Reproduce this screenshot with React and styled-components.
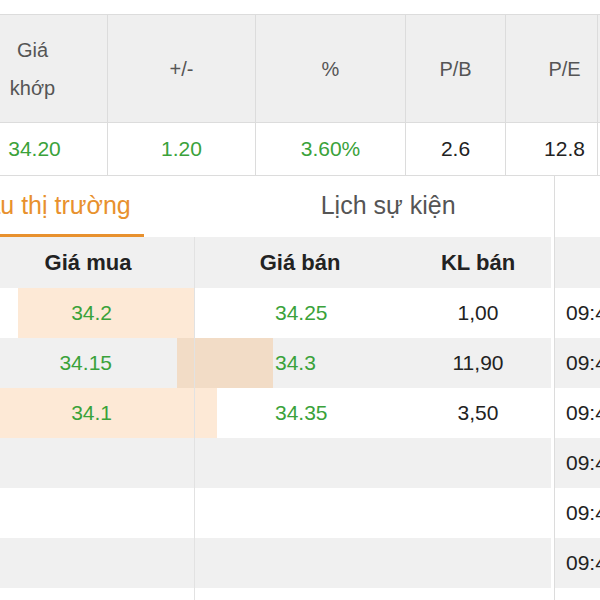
import React from "react";
import styled, { createGlobalStyle } from "styled-components";

const GlobalStyle = createGlobalStyle`
  body {
    margin: 0;
    background: #fff;
    overflow: hidden;
    font-family: "Liberation Sans", Arial, sans-serif;
  }
`;

const colors = {
  up: "#3aa23a",
  text: "#222",
  muted: "#555",
  line: "#dcdcdc",
  head: "#efefef",
  stripe: "#f0f0f0",
  orange: "#e8912e",
  bar: "#fde9d6",
  barDark: "#f2dcc6",
};

const Page = styled.div`
  width: 600px;
  height: 600px;
  overflow: hidden;
  padding-top: 14px;
  box-sizing: border-box;
`;

const Quote = styled.div`
  display: grid;
  grid-template-columns: 108px 148px 150px 100px 92px 80px;
  border-top: 1px solid ${colors.line};
  border-bottom: 1px solid ${colors.line};
`;

const QuoteHead = styled.div`
  height: 107px;
  display: flex;
  align-items: center;
  justify-content: center;
  text-align: center;
  background: ${colors.head};
  color: ${colors.muted};
  font-size: 20px;
  line-height: 38px;
  border-right: 1px solid ${colors.line};
  border-bottom: 1px solid ${colors.line};
  padding: ${(p) => p.$pad || "0"};
`;

const QuoteValue = styled.div`
  height: 52px;
  display: flex;
  align-items: center;
  justify-content: center;
  font-size: 21px;
  color: ${(p) => (p.$up ? colors.up : colors.text)};
  border-right: 1px solid ${colors.line};
  padding: ${(p) => p.$pad || "0"};
`;

const Lower = styled.div`
  display: flex;
`;

const BookPanel = styled.div`
  width: 554px;
  flex: none;
  border-right: 1px solid ${colors.line};
`;

const TabBar = styled.div`
  height: 61px;
  display: flex;
  gap: 164px;
  margin-left: -78px;
`;

const Tab = styled.div`
  display: flex;
  align-items: center;
  padding: 0 13px;
  font-size: 25px;
  white-space: nowrap;
  color: ${(p) => (p.$active ? colors.orange : colors.muted)};
  border-bottom: 3px solid ${(p) => (p.$active ? colors.orange : "transparent")};
`;

const BookRow = styled.div`
  position: relative;
  width: 551px;
  height: ${(p) => (p.$head ? 51 : 50)}px;
  display: grid;
  grid-template-columns: 195px 210px 146px;
  background: ${(p) => (p.$gray ? colors.stripe : "#fff")};
`;

const Bar = styled.div`
  position: absolute;
  top: 0;
  bottom: 0;
  background: ${(p) => (p.$dark ? colors.barDark : colors.bar)};
`;

const BookCell = styled.div`
  position: relative;
  display: flex;
  align-items: center;
  font-size: ${(p) => (p.$head ? 22 : 21)}px;
  font-weight: ${(p) => (p.$head ? "bold" : "normal")};
  color: ${(p) => (p.$up ? colors.up : colors.text)};
  justify-content: ${(p) => p.$align || "center"};
  padding: ${(p) => p.$pad || "0"};
  border-right: ${(p) => (p.$divider ? `1px solid #e2e2e2` : "none")};
`;

const TimePanel = styled.div`
  flex: 1;
  padding-top: 61px;
`;

const TimeRow = styled.div`
  height: ${(p) => (p.$head ? 51 : 50)}px;
  display: flex;
  align-items: center;
  padding-left: 11px;
  font-size: 21px;
  color: ${colors.text};
  white-space: nowrap;
  overflow: hidden;
  background: ${(p) => (p.$gray ? colors.stripe : "#fff")};
  border-right: ${(p) => (p.$head ? `1px solid ${colors.line}` : "none")};
  margin-right: ${(p) => (p.$head ? 3 : 0)}px;
`;

const book = [
  { buy: "34.2", sell: "34.25", vol: "1,00", bar: [18, 177] },
  { buy: "34.15", sell: "34.3", vol: "11,90", bar: [177, 96], dark: true },
  { buy: "34.1", sell: "34.35", vol: "3,50", bar: [0, 217] },
  {},
  {},
  {},
  {},
];

const times = ["09:45:12", "09:44:58", "09:44:31", "09:44:10", "09:43:52", "09:43:27", ""];

export default function App() {
  return (
    <Page>
      <GlobalStyle />
      <Quote>
        <QuoteHead $pad="0 42px 0 0">Giá khớp</QuoteHead>
        <QuoteHead>+/-</QuoteHead>
        <QuoteHead>%</QuoteHead>
        <QuoteHead>P/B</QuoteHead>
        <QuoteHead $pad="0 0 0 26px">P/E</QuoteHead>
        <QuoteHead />
        <QuoteValue $up $pad="0 38px 0 0">34.20</QuoteValue>
        <QuoteValue $up>1.20</QuoteValue>
        <QuoteValue $up>3.60%</QuoteValue>
        <QuoteValue>2.6</QuoteValue>
        <QuoteValue $pad="0 0 0 26px">12.8</QuoteValue>
        <QuoteValue />
      </Quote>
      <Lower>
        <BookPanel>
          <TabBar>
            <Tab $active>Độ sâu thị trường</Tab>
            <Tab>Lịch sự kiện</Tab>
          </TabBar>
          <BookRow $head $gray>
            <BookCell $head $divider $pad="0 18px 0 0">Giá mua</BookCell>
            <BookCell $head>Giá bán</BookCell>
            <BookCell $head>KL bán</BookCell>
          </BookRow>
          {book.map((r, i) => (
            <BookRow key={i} $gray={i % 2 === 1}>
              {r.bar && (
                <Bar
                  $dark={r.dark}
                  style={{ left: r.bar[0], width: r.bar[1] }}
                />
              )}
              <BookCell $up $divider $align="flex-end" $pad="0 82px 0 0">
                {r.buy}
              </BookCell>
              <BookCell $up $align="flex-start" $pad="0 0 0 80px">
                {r.sell}
              </BookCell>
              <BookCell>{r.vol}</BookCell>
            </BookRow>
          ))}
        </BookPanel>
        <TimePanel>
          <TimeRow $head $gray />
          {times.map((t, i) => (
            <TimeRow key={i} $gray={i % 2 === 1}>
              {t}
            </TimeRow>
          ))}
        </TimePanel>
      </Lower>
    </Page>
  );
}
